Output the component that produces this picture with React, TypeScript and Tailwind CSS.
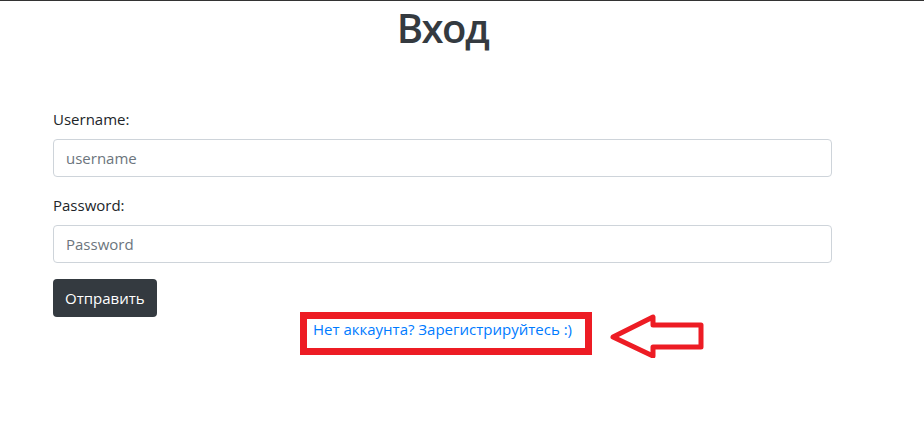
import React from "react";

const Field: React.FC<{ label: string; placeholder: string; type?: string }> = ({
  label,
  placeholder,
  type = "text",
}) => (
  <div className="mb-4">
    <label className="block mb-2 leading-6">{label}</label>
    <input
      type={type}
      placeholder={placeholder}
      className="block w-full h-[38px] px-3 border border-[#ced4da] rounded-[4px] bg-white text-[#495057] placeholder:text-[#6c757d] outline-none"
    />
  </div>
);

export default function App() {
  return (
    <div
      className="min-h-[421px] bg-white border-t border-[#333] text-[#212529] text-[15px]"
      style={{ fontFamily: '"Open Sans", "Noto Sans", sans-serif' }}
    >
      <div className="ml-[53px] w-[779px]">
        <h1 className="pt-[3px] text-center text-[40px] leading-[48px] font-semibold text-[#343a40] tracking-[-1.5px]">
          Вход
        </h1>
        <form className="mt-[55px]" onSubmit={(e) => e.preventDefault()}>
          <Field label="Username:" placeholder="username" />
          <Field label="Password:" placeholder="Password" type="password" />
          <button
            type="submit"
            className="h-[38px] px-3 rounded-[4px] bg-[#343a40] text-white"
          >
            Отправить
          </button>
        </form>
        <div className="flex justify-center">
          <div className="relative">
            <a href="#" className="text-[#007bff] leading-6 block">
              Нет аккаунта? Зарегистрируйтесь :)
            </a>
            <div className="absolute left-[-13px] right-[-20px] top-[-5px] bottom-[-14px] border-[7px] border-[#ed1c24] pointer-events-none" />
            <svg
              className="absolute top-[-5px] right-[-135px]"
              width="98"
              height="46"
              viewBox="0 0 98 46"
            >
              <polygon
                points="4,25 44,5 44,13 92,13 92,35 44,35 44,44"
                fill="none"
                stroke="#ed1c24"
                strokeWidth="5"
                strokeLinejoin="round"
              />
            </svg>
          </div>
        </div>
      </div>
    </div>
  );
}
